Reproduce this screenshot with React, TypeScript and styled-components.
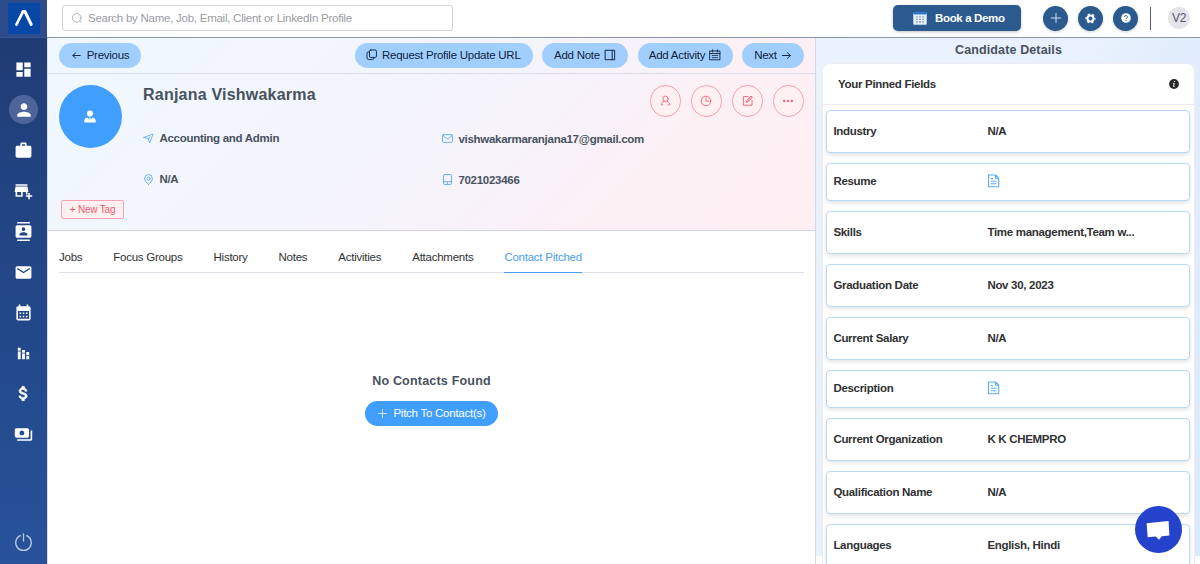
import React from "react";
import styled, { createGlobalStyle, css } from "styled-components";
import {
  MdDashboard,
  MdPerson,
  MdWork,
  MdAddBusiness,
  MdContacts,
  MdMail,
  MdCalendarMonth,
  MdStackedBarChart,
  MdPayments,
} from "react-icons/md";

const GlobalStyle = createGlobalStyle`
  * { box-sizing: border-box; }
  body {
    margin: 0;
    overflow: hidden;
    background: #fff;
    font-family: "Liberation Sans", Arial, sans-serif;
    font-size: 11.5px;
    letter-spacing: -0.25px;
    color: #303133;
  }
  button { font: inherit; letter-spacing: inherit; margin: 0; cursor: pointer; }
  svg { display: block; flex: none; }
`;

const Page = styled.div`
  display: grid;
  grid-template-columns: 47px 1fr;
  width: 1200px;
  height: 564px;
  overflow: hidden;
`;

/* ---------- sidebar ---------- */

const Sidebar = styled.nav`
  display: flex;
  flex-direction: column;
  align-items: center;
  color: #fff;
  background: linear-gradient(180deg, #20396f 0%, #21427f 25%, #23488a 60%, #28539b 100%);
`;

const LogoBox = styled.div`
  width: 100%;
  height: 38px;
  padding: 3px 0 0 8px;
  background: #2d4c8c;
  border-bottom: 1px solid #3a5590;
`;

const Logo = styled.div`
  width: 32px;
  height: 31px;
  display: grid;
  place-items: center;
  padding-bottom: 2px;
  background: #0747a6;
`;

const NavList = styled.div`
  display: flex;
  flex-direction: column;
  align-items: center;
  gap: 11.6px;
  padding-top: 16.6px;
`;

const NavItem = styled.div<{ $active?: boolean }>`
  width: 29px;
  height: 29px;
  border-radius: 50%;
  display: grid;
  place-items: center;
  background: ${(p) => (p.$active ? "#4d659b" : "transparent")};
`;

const PowerItem = styled.div`
  margin-top: auto;
  margin-bottom: 12px;
  color: #b9c9e6;
`;

/* ---------- header ---------- */

const Content = styled.div`
  display: grid;
  grid-template-rows: 38px 1fr;
  min-width: 0;
  min-height: 0;
`;

const Header = styled.header`
  display: flex;
  align-items: center;
  padding: 0 10px 1px 15px;
  border-bottom: 1px solid #8c97ab;
  background: #fff;
`;

const Search = styled.div`
  display: flex;
  align-items: center;
  gap: 5px;
  width: 391px;
  height: 26px;
  padding-left: 8px;
  border: 1px solid #d0d3d9;
  border-radius: 3px;
  color: #999ca3;
`;

const DemoButton = styled.button`
  display: flex;
  align-items: center;
  gap: 8px;
  width: 128px;
  height: 26px;
  margin-left: auto;
  padding: 0 0 0 20px;
  border: 0;
  border-radius: 5px;
  color: #fff;
  font-weight: bold;
  letter-spacing: -0.35px;
  background: #2a5a8e;
  box-shadow: 0 1px 3px rgba(0, 0, 0, 0.25);
`;

const RoundActions = styled.div`
  display: flex;
  gap: 10px;
  margin-left: 22px;
`;

const RoundButton = styled.button`
  width: 25px;
  height: 25px;
  padding: 0;
  display: grid;
  place-items: center;
  border: 0;
  border-radius: 50%;
  color: #fff;
  background: #2a5a8e;
  box-shadow: 0 1px 3px rgba(0, 0, 0, 0.2);
`;

const Divider = styled.div`
  width: 1px;
  height: 23px;
  margin: 0 17px 0 12px;
  background: #56597a;
`;

const UserBadge = styled.div`
  width: 22px;
  height: 22px;
  display: grid;
  place-items: center;
  border-radius: 50%;
  font-size: 12px;
  color: #54566a;
  background: #e5e5e9;
`;

/* ---------- main column ---------- */

const Body = styled.div`
  display: grid;
  grid-template-columns: 768px 1fr;
  min-height: 0;
`;

const Main = styled.main`
  display: flex;
  flex-direction: column;
  background: #fff;
  border-left: 1px solid #d9dbe8;
`;

const Hero = styled.section`
  height: 193px;
  border-bottom: 1px solid #d3d3df;
  background: linear-gradient(135deg, #f0f8ff 0%, #f3f5fd 38%, #f8f2f9 66%, #fdf0f4 77%, #feeff3 100%);
`;

const ActionBar = styled.div`
  display: flex;
  align-items: center;
  height: 36px;
  padding: 0 11px;
  gap: 9.5px;
  border-bottom: 1px solid #dcdfe7;
`;

const Pill = styled.button<{ $w: number; $gap?: number; $primary?: boolean }>`
  display: flex;
  align-items: center;
  justify-content: center;
  gap: ${(p) => p.$gap ?? 4}px;
  width: ${(p) => p.$w}px;
  height: 25px;
  padding: 0 0 1px;
  border: 0;
  border-radius: 13px;
  white-space: nowrap;
  color: ${(p) => (p.$primary ? "#fff" : "#13233a")};
  background: ${(p) => (p.$primary ? "#409eff" : "#a0cfff")};
`;

const Spacer = styled.div`
  flex: 1;
`;

const Profile = styled.div`
  display: grid;
  grid-template-columns: 84px 1fr;
  padding: 11px 11px 0;
`;

const AvatarColumn = styled.div`
  display: flex;
  flex-direction: column;
  align-items: flex-start;
`;

const Avatar = styled.div`
  width: 63px;
  height: 63px;
  display: grid;
  place-items: center;
  padding-right: 2px;
  border-radius: 50%;
  background: #409eff;
`;

const TagButton = styled.button`
  width: 63px;
  height: 19px;
  margin: 52px 0 0 2px;
  padding: 0;
  border: 1px solid #f9a3b4;
  border-radius: 2px;
  font-size: 10px;
  letter-spacing: -0.2px;
  color: #f0586f;
  background: #fff0f1;
`;

const NameRow = styled.div`
  display: flex;
  justify-content: space-between;
  height: 46px;
`;

const Name = styled.h1`
  margin: 1px 0 0;
  font-size: 16px;
  line-height: 18px;
  letter-spacing: 0.22px;
  color: #48525f;
`;

const OutlineActions = styled.div`
  display: flex;
  gap: 9.4px;
`;

const OutlineButton = styled.button`
  width: 31.5px;
  height: 31.5px;
  padding: 0;
  display: grid;
  place-items: center;
  border: 1px solid #f9a0b0;
  border-radius: 50%;
  color: #f0647c;
  background: #fff1f2;
`;

const Facts = styled.div`
  display: grid;
  grid-template-columns: 299px 1fr;
  row-gap: 27px;
`;

const Fact = styled.div<{ $shift?: boolean }>`
  display: flex;
  align-items: center;
  height: 14px;
  gap: 5.4px;
  font-weight: bold;
  letter-spacing: -0.28px;
  color: #48525f;
  ${(p) =>
    p.$shift &&
    css`
      margin-top: 1px;
      height: 13px;
    `}
  svg { color: #57a6f5; }
`;

const Tabs = styled.div`
  display: flex;
  gap: 31px;
  height: 42px;
  margin: 0 11px;
  border-bottom: 1px solid #dcdfe6;
`;

const Tab = styled.div<{ $active?: boolean }>`
  height: 42px;
  padding-top: 20px;
  line-height: 13px;
  white-space: nowrap;
  color: ${(p) => (p.$active ? "#4a9df5" : "#303133")};
  border-bottom: ${(p) => (p.$active ? "1.5px solid #4a9df5" : "0")};
`;

const Empty = styled.div`
  display: flex;
  flex-direction: column;
  align-items: center;
  gap: 12px;
  padding-top: 101px;
`;

const EmptyTitle = styled.h2`
  margin: 0;
  font-size: 12.5px;
  line-height: 15px;
  letter-spacing: 0.2px;
  color: #48525f;
`;

/* ---------- details panel ---------- */

const Details = styled.aside`
  display: flex;
  flex-direction: column;
  height: 526px;
  padding: 0 5px 0 6px;
  border-left: 1px solid #cfd9ea;
  background: linear-gradient(100deg, #e9f2fd 0%, #e8f1fd 60%, #dbe9fc 100%) no-repeat 0 0 / 100% 518px;
  overflow: hidden;
`;

const DetailsTitle = styled.h2`
  margin: 0;
  height: 25px;
  line-height: 25px;
  text-align: center;
  font-size: 12.5px;
  letter-spacing: 0.12px;
  color: #48525f;
`;

const Card = styled.div`
  flex: none;
  height: 540px;
  border: 1px solid #ecedf2;
  border-radius: 8px;
  background: #fff;
`;

const CardHead = styled.div`
  display: flex;
  align-items: center;
  justify-content: space-between;
  height: 41px;
  padding: 0 15px 1px;
  border-bottom: 1px solid #e9ebf1;
  font-weight: bold;
  letter-spacing: -0.3px;
`;

const FieldList = styled.div`
  display: flex;
  flex-direction: column;
  gap: 10.6px;
  padding: 5.3px 4px 0 3.4px;
`;

const Field = styled.div<{ $short?: boolean }>`
  display: grid;
  grid-template-columns: 154px 1fr;
  align-items: center;
  height: ${(p) => (p.$short ? 37.4 : 42.4)}px;
  padding: 0 6px 1px;
  border: 1px solid #b9daf4;
  border-radius: 4px;
  font-weight: bold;
  letter-spacing: -0.3px;
  background: #fff;
  box-shadow: 0 2px 4px rgba(0, 0, 0, 0.11);
`;

const ChatButton = styled.button`
  position: absolute;
  left: 1135px;
  top: 506px;
  width: 47px;
  height: 47px;
  padding: 0;
  display: grid;
  place-items: center;
  border: 0;
  border-radius: 50%;
  background: #2542cd;
`;

/* ---------- outline icons on a 1024 grid ---------- */

type IconProps = { size: number; weight?: number; children: React.ReactNode };

const Outline = ({ size, weight = 64, children }: IconProps) => (
  <svg
    width={size}
    height={size}
    viewBox="0 0 1024 1024"
    fill="none"
    stroke="currentColor"
    strokeWidth={weight}
    strokeLinejoin="round"
    strokeLinecap="round"
  >
    {children}
  </svg>
);

const ArrowLeft = () => (
  <Outline size={11} weight={90}>
    <path d="M860 512H180M430 270L170 512l260 242" />
  </Outline>
);
const ArrowRight = () => (
  <Outline size={11} weight={90}>
    <path d="M124 512h740M600 250l270 262-270 262" />
  </Outline>
);
const Plus = ({ size }: { size: number }) => (
  <Outline size={size}>
    <path d="M512 120v784M120 512h784" />
  </Outline>
);
const CopyIcon = () => (
  <Outline size={11.5} weight={84}>
    <rect x="310" y="90" width="620" height="660" rx="110" />
    <path d="M310 260H210q-120 0-120 120v430q0 120 120 120h380q120 0 120-120v-60" />
  </Outline>
);
const NotebookIcon = () => (
  <Outline size={12} weight={84}>
    <path d="M130 110h780v804H130zM700 110v804" />
  </Outline>
);
const DateIcon = () => (
  <Outline size={12} weight={78}>
    <path d="M90 170h844v750H90zM90 390h844M310 70v180M714 70v180M280 560h90M467 560h90M654 560h90M280 740h90M467 740h90M654 740h90" />
  </Outline>
);
const PersonOutline = () => (
  <Outline size={11} weight={84}>
    <circle cx="512" cy="350" r="250" />
    <path d="M370 600C230 640 130 740 120 920h150M654 600c140 40 240 140 250 320H754" />
  </Outline>
);
const ClockIcon = () => (
  <Outline size={12} weight={80}>
    <circle cx="512" cy="512" r="410" />
    <path d="M512 260v270h240" />
  </Outline>
);
const EditIcon = () => (
  <Outline size={11.5} weight={84}>
    <path d="M540 140H120v770h770V490" />
    <path d="M400 620l40-160 370-370 120 120-370 370zM480 540L850 170" />
  </Outline>
);
const DotsIcon = () => (
  <svg width="12" height="12" viewBox="0 0 12 12" fill="currentColor">
    <circle cx="2.2" cy="6" r="1.2" />
    <circle cx="6" cy="6" r="1.2" />
    <circle cx="9.8" cy="6" r="1.2" />
  </svg>
);
const PositionIcon = () => (
  <Outline size={11} weight={76}>
    <path d="M80 410L930 100 620 930 490 540zM490 540l160-170" />
  </Outline>
);
const PinIcon = () => (
  <Outline size={11} weight={76}>
    <path d="M512 960C330 810 150 620 150 420a362 362 0 01724 0c0 200-180 390-362 540z" />
    <circle cx="512" cy="430" r="150" />
  </Outline>
);
const MessageIcon = () => (
  <Outline size={11} weight={80}>
    <rect x="50" y="150" width="924" height="720" rx="80" />
    <path d="M110 240l310 270q92 70 184 0l310-270" />
  </Outline>
);
const MobileIcon = () => (
  <Outline size={11} weight={84}>
    <rect x="140" y="50" width="744" height="924" rx="80" />
    <path d="M140 720h744M512 800v80" />
  </Outline>
);
const DocumentIcon = () => (
  <svg width="13" height="14" viewBox="0 0 13 14" fill="none" stroke="#5ea9f7" strokeWidth="1.1">
    <path d="M1.5 1h7.2l3 3v8.8H1.5zM8.5 1.2v3h3M3.7 4.6h2.5M3.7 7.2h5.8M3.7 9.8h5.8" />
  </svg>
);
const SearchIcon = () => (
  <Outline size={12} weight={66}>
    <circle cx="490" cy="500" r="370" />
    <path d="M760 770l120 130" />
  </Outline>
);

const LogoMark = () => (
  <svg width="20" height="18" viewBox="0 0 20 18" fill="none" stroke="#fff" strokeLinecap="round">
    <path d="M2.4 15.7L9 2.6" strokeWidth="2.6" />
    <path d="M9 2.6L11 2.6L17.2 15.5" strokeWidth="3" strokeLinejoin="round" />
  </svg>
);
const DollarIcon = ({ size }: { size: number }) => (
  <svg width={size} height={size} viewBox="0 0 24 24" fill="#fff" stroke="#fff" strokeWidth="0.9">
    <path d="M11.8 10.9c-2.27-.59-3-1.2-3-2.15 0-1.09 1.01-1.85 2.7-1.85 1.78 0 2.44.85 2.5 2.1h2.21c-.07-1.72-1.12-3.3-3.21-3.81V3h-3v2.16c-1.94.42-3.5 1.68-3.5 3.61 0 2.31 1.91 3.46 4.7 4.13 2.5.6 3 1.48 3 2.41 0 .69-.49 1.79-2.7 1.79-2.06 0-2.87-.92-2.98-2.1h-2.2c.12 2.19 1.76 3.42 3.68 3.83V21h3v-2.15c1.95-.37 3.5-1.5 3.5-3.55 0-2.84-2.43-3.81-4.7-4.4z" />
  </svg>
);
const PowerIcon = () => (
  <svg width="19" height="19" viewBox="0 0 19 19" fill="none" stroke="currentColor" strokeWidth="1.3" strokeLinecap="round">
    <path d="M6.2 2.6a7.8 7.8 0 1 0 6.6 0M9.5 1v7" />
  </svg>
);
const DemoCalendar = () => (
  <svg width="14" height="14" viewBox="0 0 14 14">
    <rect x="0.3" y="1.4" width="13.4" height="12.3" rx="1" fill="#e8eef6" />
    <rect x="0.3" y="0.8" width="13.4" height="2.6" rx="1" fill="#2f78c8" />
    <path
      d="M3.2 5.8h1.4M6.3 5.8h1.4M9.4 5.8h1.4M3.2 8.4h1.4M6.3 8.4h1.4M9.4 8.4h1.4M3.2 11h1.4M6.3 11h1.4M9.4 11h1.4"
      stroke="#6f8fb4"
      strokeWidth="1.3"
    />
  </svg>
);
const GearIcon = () => (
  <svg width="11" height="11" viewBox="0 0 11 11" fill="none" stroke="#fff">
    <circle cx="5.5" cy="5.5" r="3" strokeWidth="2" />
    <circle cx="5.5" cy="5.5" r="4.4" strokeWidth="1.4" strokeDasharray="2.1 2.507" strokeDashoffset="1.05" />
  </svg>
);
const HelpIcon = () => (
  <svg width="10" height="10" viewBox="0 0 10 10" fill="none">
    <circle cx="5" cy="5" r="4.8" fill="#fff" />
    <path d="M3.6 3.9a1.4 1.4 0 1 1 2.1 1.2q-.7.4-.7 1" stroke="#2a5a8e" strokeWidth="1" />
    <circle cx="5" cy="7.5" r=".6" fill="#2a5a8e" />
  </svg>
);
const InfoIcon = () => (
  <svg width="10" height="10" viewBox="0 0 10 10" fill="none">
    <circle cx="5" cy="5" r="4.9" fill="#26282b" />
    <path d="M4.2 4.4h1L4.6 7.6h.9" stroke="#fff" strokeWidth="1" />
    <circle cx="5.5" cy="2.6" r=".7" fill="#fff" />
  </svg>
);
const AvatarIcon = () => (
  <svg width="12" height="13" viewBox="0 0 12 13" fill="#fff">
    <circle cx="6" cy="3.5" r="3.1" />
    <path d="M0.2 12.6V10.4Q.4 8 3.3 7.4L6 10l2.7-2.6q2.9.6 3.1 3v2.2z" />
    <path d="M5.3 7.6h1.4L6.4 10h-.8z" />
  </svg>
);
const ChatIcon = () => (
  <svg width="25" height="22" viewBox="0 0 25 22" fill="#fff">
    <path d="M0.6 4.3L22.6 2 23.4 16.4 15.8 17.2 13 20.8 9.8 17.6 1.7 18.2z" />
  </svg>
);

const navIcons = [
  { Icon: MdDashboard, size: 19 },
  { Icon: MdPerson, size: 20 },
  { Icon: MdWork, size: 19 },
  { Icon: MdAddBusiness, size: 19 },
  { Icon: MdContacts, size: 19 },
  { Icon: MdMail, size: 19 },
  { Icon: MdCalendarMonth, size: 19 },
  { Icon: MdStackedBarChart, size: 17 },
  { Icon: DollarIcon, size: 19 },
  { Icon: MdPayments, size: 19 },
];

const tabs = ["Jobs", "Focus Groups", "History", "Notes", "Activities", "Attachments", "Contact Pitched"];

const fields: { label: string; value?: string }[] = [
  { label: "Industry", value: "N/A" },
  { label: "Resume" },
  { label: "Skills", value: "Time management,Team w..." },
  { label: "Graduation Date", value: "Nov 30, 2023" },
  { label: "Current Salary", value: "N/A" },
  { label: "Description" },
  { label: "Current Organization", value: "K K CHEMPRO" },
  { label: "Qualification Name", value: "N/A" },
  { label: "Languages", value: "English, Hindi" },
];

export default function App() {
  return (
    <>
      <GlobalStyle />
      <Page>
        <Sidebar>
          <LogoBox>
            <Logo>
              <LogoMark />
            </Logo>
          </LogoBox>
          <NavList>
            {navIcons.map(({ Icon, size }, i) => (
              <NavItem key={i} $active={i === 1}>
                <Icon size={size} />
              </NavItem>
            ))}
          </NavList>
          <PowerItem>
            <PowerIcon />
          </PowerItem>
        </Sidebar>

        <Content>
          <Header>
            <Search>
              <SearchIcon />
              Search by Name, Job, Email, Client or LinkedIn Profile
            </Search>
            <DemoButton>
              <DemoCalendar />
              Book a Demo
            </DemoButton>
            <RoundActions>
              <RoundButton><Plus size={12} /></RoundButton>
              <RoundButton><GearIcon /></RoundButton>
              <RoundButton><HelpIcon /></RoundButton>
            </RoundActions>
            <Divider />
            <UserBadge>V2</UserBadge>
          </Header>

          <Body>
            <Main>
              <Hero>
                <ActionBar>
                  <Pill $w={82} $gap={5}><ArrowLeft />Previous</Pill>
                  <Spacer />
                  <Pill $w={178}><CopyIcon />Request Profile Update URL</Pill>
                  <Pill $w={86}>Add Note<NotebookIcon /></Pill>
                  <Pill $w={95}>Add Activity<DateIcon /></Pill>
                  <Pill $w={62}>Next<ArrowRight /></Pill>
                </ActionBar>
                <Profile>
                  <AvatarColumn>
                    <Avatar><AvatarIcon /></Avatar>
                    <TagButton>+ New Tag</TagButton>
                  </AvatarColumn>
                  <div>
                    <NameRow>
                      <Name>Ranjana Vishwakarma</Name>
                      <OutlineActions>
                        <OutlineButton><PersonOutline /></OutlineButton>
                        <OutlineButton><ClockIcon /></OutlineButton>
                        <OutlineButton><EditIcon /></OutlineButton>
                        <OutlineButton><DotsIcon /></OutlineButton>
                      </OutlineActions>
                    </NameRow>
                    <Facts>
                      <Fact><PositionIcon />Accounting and Admin</Fact>
                      <Fact $shift><MessageIcon />vishwakarmaranjana17@gmail.com</Fact>
                      <Fact><PinIcon />N/A</Fact>
                      <Fact $shift><MobileIcon />7021023466</Fact>
                    </Facts>
                  </div>
                </Profile>
              </Hero>
              <Tabs>
                {tabs.map((t) => (
                  <Tab key={t} $active={t === "Contact Pitched"}>{t}</Tab>
                ))}
              </Tabs>
              <Empty>
                <EmptyTitle>No Contacts Found</EmptyTitle>
                <Pill $w={133} $gap={5} $primary><Plus size={11} />Pitch To Contact(s)</Pill>
              </Empty>
            </Main>

            <Details>
              <DetailsTitle>Candidate Details</DetailsTitle>
              <Card>
                <CardHead>
                  Your Pinned Fields
                  <InfoIcon />
                </CardHead>
                <FieldList>
                  {fields.map((f) => (
                    <Field key={f.label} $short={!f.value}>
                      <span>{f.label}</span>
                      {f.value ? <span>{f.value}</span> : <DocumentIcon />}
                    </Field>
                  ))}
                </FieldList>
              </Card>
            </Details>
          </Body>
        </Content>
        <ChatButton>
          <ChatIcon />
        </ChatButton>
      </Page>
    </>
  );
}
